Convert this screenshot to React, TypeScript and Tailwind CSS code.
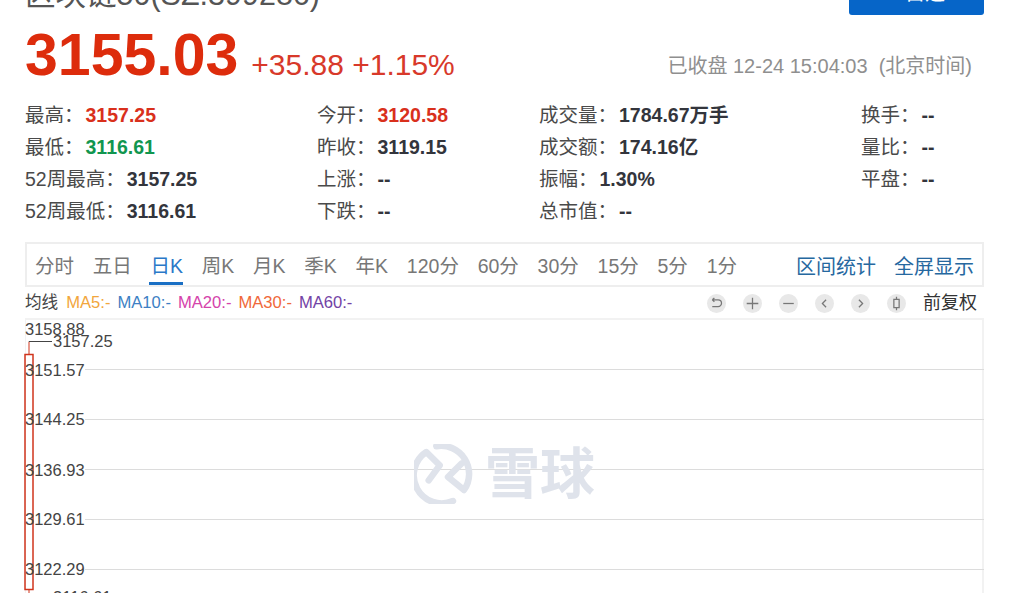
const FONT = "font-['Liberation_Sans','Noto_Sans_CJK_SC',sans-serif]";

type Stat = { label: string; value: string; color?: string };

const statColumns: { width: string; rows: Stat[] }[] = [
  {
    width: 'w-[292px]',
    rows: [
      { label: '最高：', value: '3157.25', color: 'text-[#d9301c]' },
      { label: '最低：', value: '3116.61', color: 'text-[#11964f]' },
      { label: '52周最高：', value: '3157.25' },
      { label: '52周最低：', value: '3116.61' },
    ],
  },
  {
    width: 'w-[222px]',
    rows: [
      { label: '今开：', value: '3120.58', color: 'text-[#d9301c]' },
      { label: '昨收：', value: '3119.15' },
      { label: '上涨：', value: '--' },
      { label: '下跌：', value: '--' },
    ],
  },
  {
    width: 'w-[322px]',
    rows: [
      { label: '成交量：', value: '1784.67万手' },
      { label: '成交额：', value: '174.16亿' },
      { label: '振幅：', value: '1.30%' },
      { label: '总市值：', value: '--' },
    ],
  },
  {
    width: 'w-[120px]',
    rows: [
      { label: '换手：', value: '--' },
      { label: '量比：', value: '--' },
      { label: '平盘：', value: '--' },
    ],
  },
];

const periods = ['分时', '五日', '日K', '周K', '月K', '季K', '年K', '120分', '60分', '30分', '15分', '5分', '1分'];

const maItems = [
  { label: 'MA5:-', color: 'text-[#f2a63c]' },
  { label: 'MA10:-', color: 'text-[#3d7fc4]' },
  { label: 'MA20:-', color: 'text-[#d543ab]' },
  { label: 'MA30:-', color: 'text-[#f0683a]' },
  { label: 'MA60:-', color: 'text-[#7343a5]' },
];

const yLabels = [
  { text: '3158.88', y: 335 },
  { text: '3151.57', y: 376 },
  { text: '3144.25', y: 425 },
  { text: '3136.93', y: 476 },
  { text: '3129.61', y: 525 },
  { text: '3122.29', y: 575 },
];

const gridLines = [369, 419, 469, 519, 569];

// 工具栏图标
const toolPaths = [
  'M5 5.5h5.5a3 3 0 0 1 0 6.5H5M5 5.5l2-1.8M5 5.5l2 1.8',
  'M9 3.5v11M3.5 9h11',
  'M4 9h10',
  'M10.5 5.5L7 9l3.5 3.5',
  'M7.5 5.5L11 9l-3.5 3.5',
  'M6.5 5h5v8h-5zM9 2.5V5M9 13v2.5',
];

function XueqiuLogo() {
  return (
    <svg width="60" height="60" viewBox="0 0 60 60" fill="none" stroke="#dfe3eb" strokeWidth="6.5" strokeLinecap="round" strokeLinejoin="round">
      <path d="M14.7 36.3L25.7 21.3L12.3 8A28 28 0 0 0 39 57" />
      <path d="M22.3 2.3A28 28 0 0 1 50 46L34 33L47.3 19.7" />
    </svg>
  );
}

export default function App() {
  return (
    <div className={`${FONT} relative h-[593px] w-[1010px] overflow-hidden bg-white pl-[25px] pr-[26px]`}>
      {/* 标题 */}
      <div className="-mt-[29px] flex h-[44px] items-start justify-between">
        <div className="mt-[8px] text-[30.5px] leading-[30px] text-[#555]">区块链50(SZ.399286)</div>
        <button className="flex h-[44px] w-[135px] items-center justify-center rounded-[3px] bg-[#0665c8] text-[20px] text-white">
          + 自选
        </button>
      </div>

      {/* 价格 */}
      <div className="mt-[10px] flex h-[60px] items-center">
        <span className="text-[59px] font-bold leading-none text-[#dd2c0c]">3155.03</span>
        <span className="ml-[13px] mt-[20px] text-[30px] leading-none text-[#d8392a]">+35.88 +1.15%</span>
        <span className="ml-auto mr-[12px] mt-[22px] text-[20px] leading-none text-[#8f8f8f]">已收盘 12-24 15:04:03&nbsp;&nbsp;(北京时间)</span>
      </div>

      {/* 行情数据 */}
      <div className="mt-[15px] flex h-[128px]">
        {statColumns.map((col) => (
          <div key={col.rows[0].label} className={col.width}>
            {col.rows.map((row) => (
              <div key={row.label} className="flex h-[32px] items-center text-[19.5px] leading-none text-[#4a4a4a]">
                <span>{row.label}</span>
                <span className={`ml-[2px] font-bold ${row.color ?? 'text-[#33353c]'}`}>{row.value}</span>
              </div>
            ))}
          </div>
        ))}
      </div>

      {/* 周期切换 */}
      <div className="mt-[14px] flex h-[45px] items-center border-2 border-[#eeeeee] pl-[8px] pr-[8px] pt-[5px] text-[19.5px] text-[#777]">
        <div className="flex h-full items-center gap-[18.75px]">
          {periods.map((p) => (
            <span
              key={p}
              className={
                p === '日K'
                  ? '-ml-[2px] flex h-full items-center border-b-[3px] border-[#1a6fc4] pl-[2px] pt-[3px] text-[#2a78c8]'
                  : 'whitespace-nowrap'
              }
            >
              {p}
            </span>
          ))}
        </div>
        <div className="ml-auto flex gap-[18px] text-[20px] text-[#26689f]">
          <span>区间统计</span>
          <span>全屏显示</span>
        </div>
      </div>

      {/* 均线 */}
      <div className="flex h-[31px] items-center pt-[2px] text-[16.6px]">
        <span className="mr-[8px] text-[#444]">均线</span>
        <div className="flex gap-[7px]">
          {maItems.map((m) => (
            <span key={m.label} className={m.color}>
              {m.label}
            </span>
          ))}
        </div>
        <div className="ml-auto flex items-center gap-[17px] pr-[7px]">
          {toolPaths.map((d) => (
            <span key={d} className="flex h-[19px] w-[19px] items-center justify-center rounded-full bg-[#e8e8e8]">
              <svg width="19" height="19" viewBox="0 0 18 18" fill="none" stroke="#777" strokeWidth="1.2">
                <path d={d} />
              </svg>
            </span>
          ))}
          <span className="text-[18px] text-[#333]">前复权</span>
        </div>
      </div>

      {/* K线图 */}
      <div className="relative h-[275px] border-t-2 border-r-2 border-l border-[#f2f2f2]">
        <svg className="absolute left-[-26px] top-[-320px]" width="1010" height="593" viewBox="0 0 1010 593">
          {gridLines.map((y) => (
            <line key={y} x1="85" y1={y + 0.5} x2="984" y2={y + 0.5} stroke="#dcdcdc" />
          ))}
          <path d="M29 342V341.5H52" fill="none" stroke="#444" />
          <path d="M29 354V342" stroke="#d0341c" />
          <rect x="25" y="354.5" width="8" height="235" fill="none" stroke="#d0341c" strokeWidth="1.5" />
          <path d="M29 590V593" stroke="#d0341c" />
          {yLabels.map((l) => (
            <text key={l.text} x="25" y={l.y} fontSize="16.5" fill="#444">
              {l.text}
            </text>
          ))}
          <text x="53" y="347" fontSize="16.5" fill="#444">3157.25</text>
          <text x="53" y="603" fontSize="16.5" fill="#444">3116.61</text>
        </svg>
        <div className="absolute left-[388px] top-[124px] flex items-center gap-[11px]">
          <XueqiuLogo />
          <span className="text-[55px] font-bold leading-none text-[#dfe3eb]">雪球</span>
        </div>
      </div>
    </div>
  );
}
